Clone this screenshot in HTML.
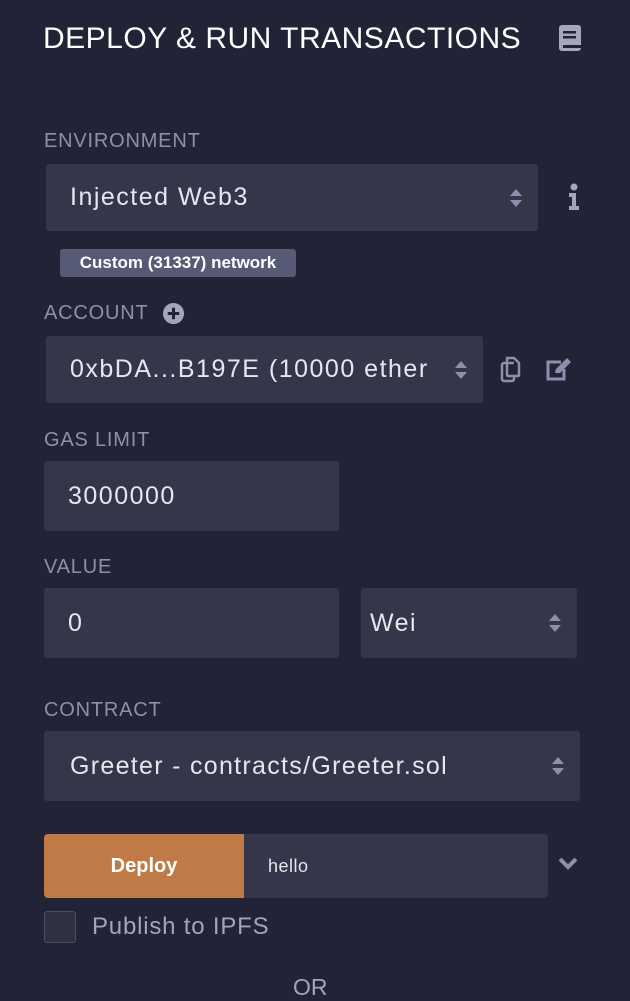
<!DOCTYPE html><html><head><style>
body{margin:0;width:630px;height:998px;background:#222336;font-family:"Liberation Sans",sans-serif;position:relative;overflow:hidden}
.a{position:absolute}
.lbl{color:#8d90a6;font-size:20px;letter-spacing:0.8px}
.box{background:#35364a;border-radius:3px;color:#e6e7ee;font-size:25px;letter-spacing:1.5px;box-sizing:border-box;display:flex;align-items:center;padding-left:24px}
.arr{position:absolute;right:15px;top:50%;margin-top:-12px;width:14px;height:24px}
</style></head><body>
<div class="a" style="left:43px;top:22px;color:#fff;font-size:30px;letter-spacing:0.5px">DEPLOY &amp; RUN TRANSACTIONS</div>
<svg class="a" style="left:558px;top:24px" width="24" height="28" viewBox="0 0 24 28"><rect x="1" y="1" width="22" height="26" rx="3" fill="#a3a6bd"/><rect x="5" y="7" width="13" height="2.5" fill="#222336"/><rect x="5" y="12" width="13" height="2.5" fill="#222336"/><rect x="5" y="21" width="18" height="3" fill="#222336"/></svg>

<div class="a lbl" style="left:44px;top:130px">ENVIRONMENT</div>
<div class="a box" style="left:46px;top:164px;width:492px;height:67px">Injected Web3<svg class="arr" viewBox="0 0 14 24"><path d="M1 10L7 3L13 10Z M1 14L7 21L13 14Z" fill="#8b91ad"/></svg></div>
<svg class="a" style="left:568px;top:183px" width="12" height="28" viewBox="0 0 12 28"><circle cx="6" cy="4" r="3.5" fill="#a3a6bd"/><path d="M1 10H8V23H11V27H1V23H4V14H1Z" fill="#a3a6bd"/></svg>
<div class="a" style="left:60px;top:249px;width:236px;height:28px;background:#575a74;border-radius:3px;color:#fff;font-size:17px;font-weight:bold;line-height:28px;text-align:center">Custom (31337) network</div>

<div class="a lbl" style="left:44px;top:302px">ACCOUNT</div>
<svg class="a" style="left:162px;top:302px" width="23" height="23" viewBox="0 0 24 24"><circle cx="12" cy="12" r="11" fill="#a3a6bd"/><path d="M12 6V18M6 12H18" stroke="#222336" stroke-width="3.2"/></svg>
<div class="a box" style="left:46px;top:336px;width:437px;height:67px;white-space:nowrap;overflow:hidden">0xbDA...B197E (10000 ether<span style="position:absolute;right:0;top:0;width:45px;height:67px;background:#35364a"></span><svg class="arr" viewBox="0 0 14 24"><path d="M1 10L7 3L13 10Z M1 14L7 21L13 14Z" fill="#8b91ad"/></svg></div>
<svg class="a" style="left:498px;top:355px" width="24" height="28" viewBox="0 0 24 28" fill="none" stroke="#8b91ad" stroke-width="2.5"><path d="M16 8H6a2 2 0 0 0-2 2V24a2 2 0 0 0 2 2H14a2 2 0 0 0 2-2V22"/><path d="M9 3H16L21 8V20a1 1 0 0 1-1 1H10a1 1 0 0 1-1-1Z"/></svg>
<svg class="a" style="left:545px;top:356px" width="28" height="26" viewBox="0 0 28 26"><path d="M16 6H3V23H19V13" fill="none" stroke="#8b91ad" stroke-width="3"/><path d="M10 17L11 13L22 2L26 6L15 17Z" fill="#8b91ad"/></svg>

<div class="a lbl" style="left:44px;top:429px">GAS LIMIT</div>
<div class="a box" style="left:44px;top:461px;width:295px;height:70px">3000000</div>

<div class="a lbl" style="left:44px;top:556px">VALUE</div>
<div class="a box" style="left:44px;top:588px;width:295px;height:70px">0</div>
<div class="a box" style="left:361px;top:588px;width:216px;height:70px;padding-left:9px">Wei<svg class="arr" viewBox="0 0 14 24"><path d="M1 10L7 3L13 10Z M1 14L7 21L13 14Z" fill="#8b91ad"/></svg></div>

<div class="a lbl" style="left:44px;top:699px">CONTRACT</div>
<div class="a box" style="left:44px;top:731px;width:536px;height:70px;padding-left:26px;letter-spacing:1.3px">Greeter - contracts/Greeter.sol<svg class="arr" viewBox="0 0 14 24"><path d="M1 10L7 3L13 10Z M1 14L7 21L13 14Z" fill="#8b91ad"/></svg></div>

<div class="a" style="left:44px;top:834px;width:504px;height:64px;background:#35364a;border-radius:4px;overflow:hidden">
<div style="width:200px;height:64px;background:#bf7a47;color:#fff;font-weight:bold;font-size:20px;line-height:64px;text-align:center">Deploy</div>
<div style="position:absolute;left:224px;top:0;line-height:64px;color:#e6e7ee;font-size:18px;letter-spacing:0.5px">hello</div></div>
<svg class="a" style="left:557px;top:856px" width="22" height="16" viewBox="0 0 22 16"><path d="M3 3L11 11L19 3" fill="none" stroke="#8b91ad" stroke-width="4"/></svg>
<div class="a" style="left:44px;top:911px;width:30px;height:30px;border:1px solid #4b4d63;border-radius:3px;background:#2f3042"></div>
<div class="a" style="left:92px;top:913px;color:#a2a4b8;font-size:24px;letter-spacing:0.8px">Publish to IPFS</div>
<div class="a" style="left:293px;top:974px;color:#a2a4b8;font-size:23px">OR</div>
</body></html>
